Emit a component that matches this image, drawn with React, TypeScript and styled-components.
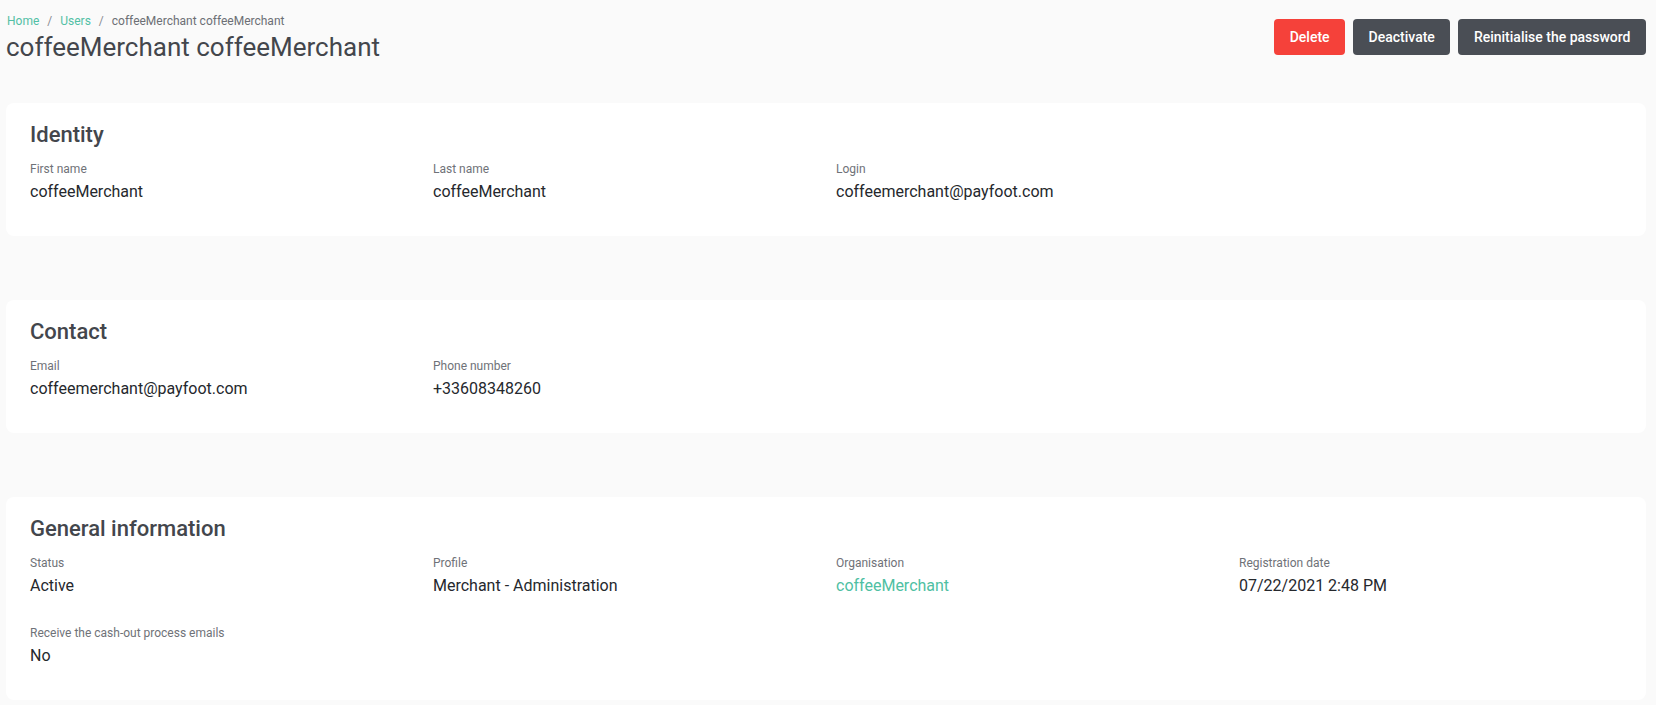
import React from "react";
import styled, { createGlobalStyle } from "styled-components";

const GlobalStyle = createGlobalStyle`
  html, body {
    margin: 0;
    padding: 0;
    background: #fafafa;
    font-family: Roboto, "Noto Sans", "Liberation Sans", sans-serif;
  }
  * { box-sizing: border-box; }
`;

const Page = styled.div`
  padding: 12px 10px 0 6px;
  display: flex;
  flex-direction: column;
`;

const Header = styled.header`
  display: flex;
  justify-content: space-between;
  align-items: flex-start;
  margin-bottom: 40px;
`;

const TitleBlock = styled.div`
  display: flex;
  flex-direction: column;
`;

const Breadcrumb = styled.nav`
  display: flex;
  align-items: center;
  font-size: 12px;
  line-height: 18px;
  color: #6c6f75;
  padding-left: 1px;
`;

const Crumb = styled.a`
  color: #52c0a5;
  text-decoration: none;
`;

const Sep = styled.span`
  color: #8a8d92;
  margin: 0 8px;
`;

const Current = styled.span`
  color: #6c6f75;
`;

const Title = styled.h1`
  margin: 1px 0 0;
  font-size: 26px;
  line-height: 32px;
  font-weight: 400;
  color: #43464c;
`;

const Actions = styled.div`
  display: flex;
  gap: 8px;
  margin-top: 7px;
`;

const Button = styled.button<{ $variant: "danger" | "dark" }>`
  height: 36px;
  padding: 0 15.5px;
  border: none;
  border-radius: 4px;
  font-family: inherit;
  font-size: 14px;
  font-weight: 500;
  color: #ffffff;
  background: ${(p) => (p.$variant === "danger" ? "#f5413a" : "#4a4e55")};
  cursor: pointer;
`;

const Cards = styled.div`
  display: flex;
  flex-direction: column;
  gap: 64px;
`;

const Card = styled.section`
  background: #ffffff;
  border-radius: 8px;
  padding: 15px 24px 32px;
`;

const CardTitle = styled.h2`
  margin: 0 0 9px;
  font-size: 22px;
  line-height: 33px;
  font-weight: 500;
  color: #43464c;
`;

const Grid = styled.div`
  display: grid;
  grid-template-columns: repeat(4, 1fr);
  column-gap: 20px;
  row-gap: 26px;
`;

const Field = styled.div`
  display: flex;
  flex-direction: column;
`;

const Label = styled.span`
  font-size: 12px;
  line-height: 18px;
  color: #6f7278;
`;

const Value = styled.span<{ $link?: boolean }>`
  margin-top: 2px;
  font-size: 16px;
  line-height: 24px;
  color: ${(p) => (p.$link ? "#4fbfa3" : "#25282d")};
`;

type FieldData = { label: string; value: string; link?: boolean };

const sections: { title: string; fields: FieldData[] }[] = [
  {
    title: "Identity",
    fields: [
      { label: "First name", value: "coffeeMerchant" },
      { label: "Last name", value: "coffeeMerchant" },
      { label: "Login", value: "coffeemerchant@payfoot.com" },
    ],
  },
  {
    title: "Contact",
    fields: [
      { label: "Email", value: "coffeemerchant@payfoot.com" },
      { label: "Phone number", value: "+33608348260" },
    ],
  },
  {
    title: "General information",
    fields: [
      { label: "Status", value: "Active" },
      { label: "Profile", value: "Merchant - Administration" },
      { label: "Organisation", value: "coffeeMerchant", link: true },
      { label: "Registration date", value: "07/22/2021 2:48 PM" },
      { label: "Receive the cash-out process emails", value: "No" },
    ],
  },
];

export default function App() {
  return (
    <>
      <GlobalStyle />
      <Page>
        <Header>
          <TitleBlock>
            <Breadcrumb>
              <Crumb href="#">Home</Crumb>
              <Sep>/</Sep>
              <Crumb href="#">Users</Crumb>
              <Sep>/</Sep>
              <Current>coffeeMerchant coffeeMerchant</Current>
            </Breadcrumb>
            <Title>coffeeMerchant coffeeMerchant</Title>
          </TitleBlock>
          <Actions>
            <Button $variant="danger">Delete</Button>
            <Button $variant="dark">Deactivate</Button>
            <Button $variant="dark">Reinitialise the password</Button>
          </Actions>
        </Header>
        <Cards>
          {sections.map((s) => (
            <Card key={s.title}>
              <CardTitle>{s.title}</CardTitle>
              <Grid>
                {s.fields.map((f) => (
                  <Field key={f.label}>
                    <Label>{f.label}</Label>
                    <Value $link={f.link}>{f.value}</Value>
                  </Field>
                ))}
              </Grid>
            </Card>
          ))}
        </Cards>
      </Page>
    </>
  );
}
